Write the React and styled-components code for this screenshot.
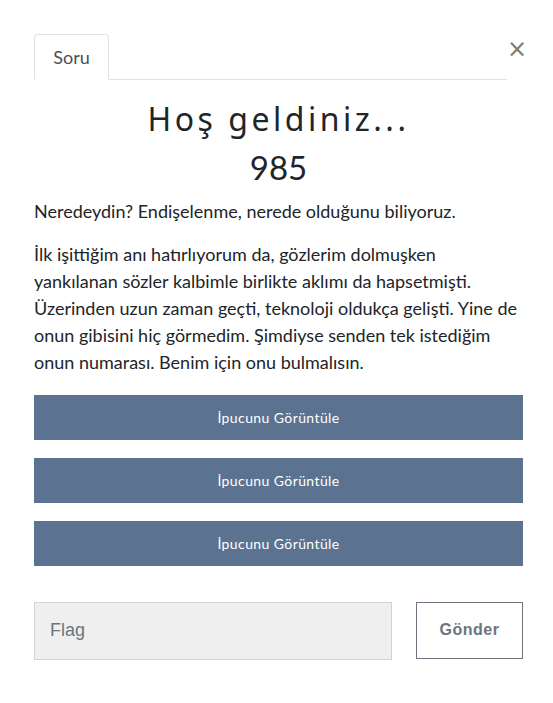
import React from "react";
import styled, { createGlobalStyle } from "styled-components";

const GlobalStyle = createGlobalStyle`
  body {
    margin: 0;
    background: #fff;
    font-family: Lato, "Noto Sans", sans-serif;
    color: #212529;
  }
`;

export default function App() {
  return (
    <>
      <GlobalStyle />
      <Modal>
        <Header>
          <Tabs>
            <Tab>Soru</Tab>
          </Tabs>
          <Close aria-label="Close">×</Close>
        </Header>
        <Title>Hoş geldiniz...</Title>
        <Value>985</Value>
        <Description>
          <p>Neredeydin? Endişelenme, nerede olduğunu biliyoruz.</p>
          <p>
            İlk işittiğim anı hatırlıyorum da, gözlerim dolmuşken yankılanan
            sözler kalbimle birlikte aklımı da hapsetmişti. Üzerinden uzun
            zaman geçti, teknoloji oldukça gelişti. Yine de onun gibisini hiç
            görmedim. Şimdiyse senden tek istediğim onun numarası. Benim için
            onu bulmalısın.
          </p>
        </Description>
        <Hints>
          <HintButton>İpucunu Görüntüle</HintButton>
          <HintButton>İpucunu Görüntüle</HintButton>
          <HintButton>İpucunu Görüntüle</HintButton>
        </Hints>
        <SubmitRow>
          <FlagInput placeholder="Flag" />
          <SubmitButton>Gönder</SubmitButton>
        </SubmitRow>
      </Modal>
    </>
  );
}

const Modal = styled.div`
  padding: 34px 30px 40px 34px;
`;

const Header = styled.div`
  display: flex;
  align-items: flex-start;
`;

const Tabs = styled.div`
  flex: 0 0 473px;
  display: flex;
  border-bottom: 1px solid #dee2e6;
`;

const Tab = styled.div`
  width: 75px;
  height: 46px;
  margin-bottom: -1px;
  box-sizing: border-box;
  border: 1px solid #dee2e6;
  border-bottom-color: #fff;
  border-radius: 4px 4px 0 0;
  display: flex;
  align-items: center;
  justify-content: center;
  font-size: 18px;
  color: #495057;
  background: #fff;
`;

const Close = styled.button`
  margin-left: auto;
  margin-top: 3px;
  margin-right: 1px;
  padding: 0;
  border: none;
  background: none;
  font-family: "DejaVu Sans", sans-serif;
  font-size: 24px;
  font-weight: 400;
  line-height: 24px;
  color: #7a7a7a;
`;

const Title = styled.h2`
  margin: 20px 0 0;
  text-align: center;
  font-family: "Noto Sans", sans-serif;
  font-weight: 400;
  font-size: 32px;
  letter-spacing: 3.5px;
  line-height: 1.2;
  color: #212529;
`;

const Value = styled.h3`
  margin: 10px 0 0;
  text-align: center;
  font-weight: 400;
  font-size: 33px;
  line-height: 1.2;
`;

const Description = styled.div`
  margin-top: 10px;
  font-size: 18px;
  line-height: 27px;
  p {
    margin: 0 0 16px;
  }
  p:last-child {
    margin-bottom: 19px;
  }
`;

const Hints = styled.div`
  display: flex;
  flex-direction: column;
  gap: 18px;
`;

const HintButton = styled.button`
  height: 45px;
  border: none;
  background: #5b7290;
  color: #fff;
  font-family: Lato, sans-serif;
  font-size: 14px;
  letter-spacing: 0.4px;
`;

const SubmitRow = styled.div`
  display: flex;
  gap: 24px;
  margin-top: 36px;
`;

const FlagInput = styled.input`
  flex: 0 0 358px;
  box-sizing: border-box;
  height: 58px;
  padding: 0 15px;
  border: 1px solid #ced4da;
  background: #efefef;
  font-family: "Liberation Sans", Arial, sans-serif;
  font-size: 18px;
  &::placeholder {
    color: #6c757d;
  }
`;

const SubmitButton = styled.button`
  flex: 1;
  height: 57px;
  border: 1px solid #6c757d;
  background: #fff;
  color: #6c757d;
  font-family: "Liberation Sans", Arial, sans-serif;
  font-size: 16px;
  font-weight: 700;
  letter-spacing: 0.5px;
`;
